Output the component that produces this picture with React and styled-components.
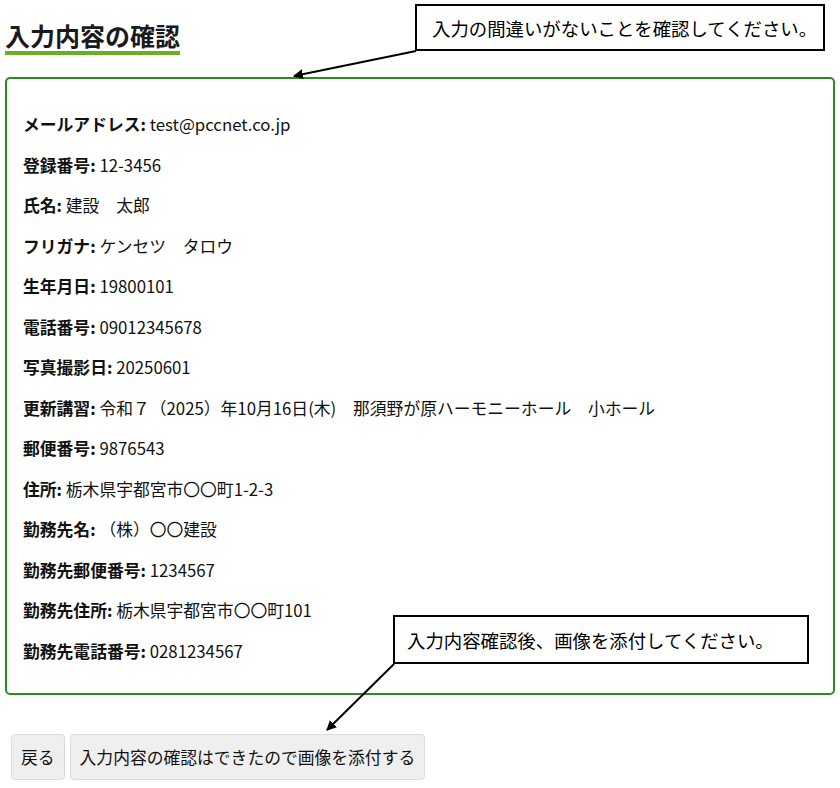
import React from "react"
import styled, { createGlobalStyle } from "styled-components"

const GlobalStyle = createGlobalStyle`
  body {
    margin: 0;
    background: #fff;
    font-family: "Noto Sans CJK JP", "Noto Sans", sans-serif;
    color: #111;
  }
`

const rows = [
  ["メールアドレス", "test@pccnet.co.jp"],
  ["登録番号", "12-3456"],
  ["氏名", "建設　太郎"],
  ["フリガナ", "ケンセツ　タロウ"],
  ["生年月日", "19800101"],
  ["電話番号", "09012345678"],
  ["写真撮影日", "20250601"],
  ["更新講習", "令和７（2025）年10月16日(木)　那須野が原ハーモニーホール　小ホール"],
  ["郵便番号", "9876543"],
  ["住所", "栃木県宇都宮市〇〇町1-2-3"],
  ["勤務先名", "（株）〇〇建設"],
  ["勤務先郵便番号", "1234567"],
  ["勤務先住所", "栃木県宇都宮市〇〇町101"],
  ["勤務先電話番号", "0281234567"],
]

const notes = [
  { left: 415, top: 4, width: 410, height: 47, pad: 15, text: "入力の間違いがないことを確認してください。" },
  { left: 393, top: 615, width: 416, height: 49, pad: 12, text: "入力内容確認後、画像を添付してください。" },
]

const App = () => {
  return (
    <Page>
      <GlobalStyle />
      <Title>入力内容の確認</Title>
      <Panel>
        {rows.map(([label, value]) => (
          <Row key={label}>
            <strong>{label}:</strong> {value}
          </Row>
        ))}
      </Panel>
      <Actions>
        <Button>戻る</Button>
        <Button>入力内容の確認はできたので画像を添付する</Button>
      </Actions>

      {notes.map(n => (
        <Note
          key={n.text}
          $pad={n.pad}
          style={{ left: n.left, top: n.top, width: n.width, height: n.height }}
        >
          {n.text}
        </Note>
      ))}
      <Arrows width="840" height="788" viewBox="0 0 840 788">
        <defs>
          <marker id="head" markerWidth="10" markerHeight="10" refX="9" refY="5" orient="auto" markerUnits="userSpaceOnUse">
            <path d="M0,0 L10,5 L0,10 z" fill="#000" />
          </marker>
        </defs>
        <line x1="416" y1="51" x2="294" y2="76" stroke="#000" strokeWidth="2" markerEnd="url(#head)" />
        <line x1="394" y1="664" x2="327" y2="730" stroke="#000" strokeWidth="2" markerEnd="url(#head)" />
      </Arrows>
    </Page>
  )
}

const Page = styled.div`
  position: relative;
  width: 840px;
  height: 788px;
  padding: 0 5px;
  box-sizing: border-box;
  overflow: hidden;
`

const Title = styled.h2`
  display: inline-block;
  margin: 20px 0 0;
  font-size: 25px;
  line-height: 31px;
  font-weight: 700;
  color: #1a1a1a;
  border-bottom: 4px solid #6ab023;
`

const Panel = styled.div`
  margin-top: 22px;
  border: 2px solid #2b8c1f;
  border-radius: 5px;
  padding: 17px 16px 14px;
`

const Row = styled.p`
  margin: 16px 0;
  font-size: 16.8px;
  line-height: 24.5px;
  color: #111;
  strong {
    font-weight: 700;
  }
`

const Actions = styled.div`
  display: flex;
  gap: 5px;
  margin: 39px 0 0 6px;
`

const Button = styled.button`
  font-family: "Noto Sans CJK JP", "Noto Sans", sans-serif;
  font-size: 16.8px;
  line-height: 24px;
  padding: 10px 9px;
  color: #111;
  background: #efefef;
  border: 1px solid #dcdcdc;
  border-radius: 4px;
`

const Note = styled.div`
  position: absolute;
  box-sizing: border-box;
  display: flex;
  align-items: center;
  padding: 0 ${p => p.$pad}px;
  background: #fff;
  border: 2px solid #000;
  font-family: "Noto Sans CJK JP", sans-serif;
  font-size: 18.4px;
  color: #000;
  white-space: nowrap;
`

const Arrows = styled.svg`
  position: absolute;
  left: 0;
  top: 0;
  pointer-events: none;
`

export default App
